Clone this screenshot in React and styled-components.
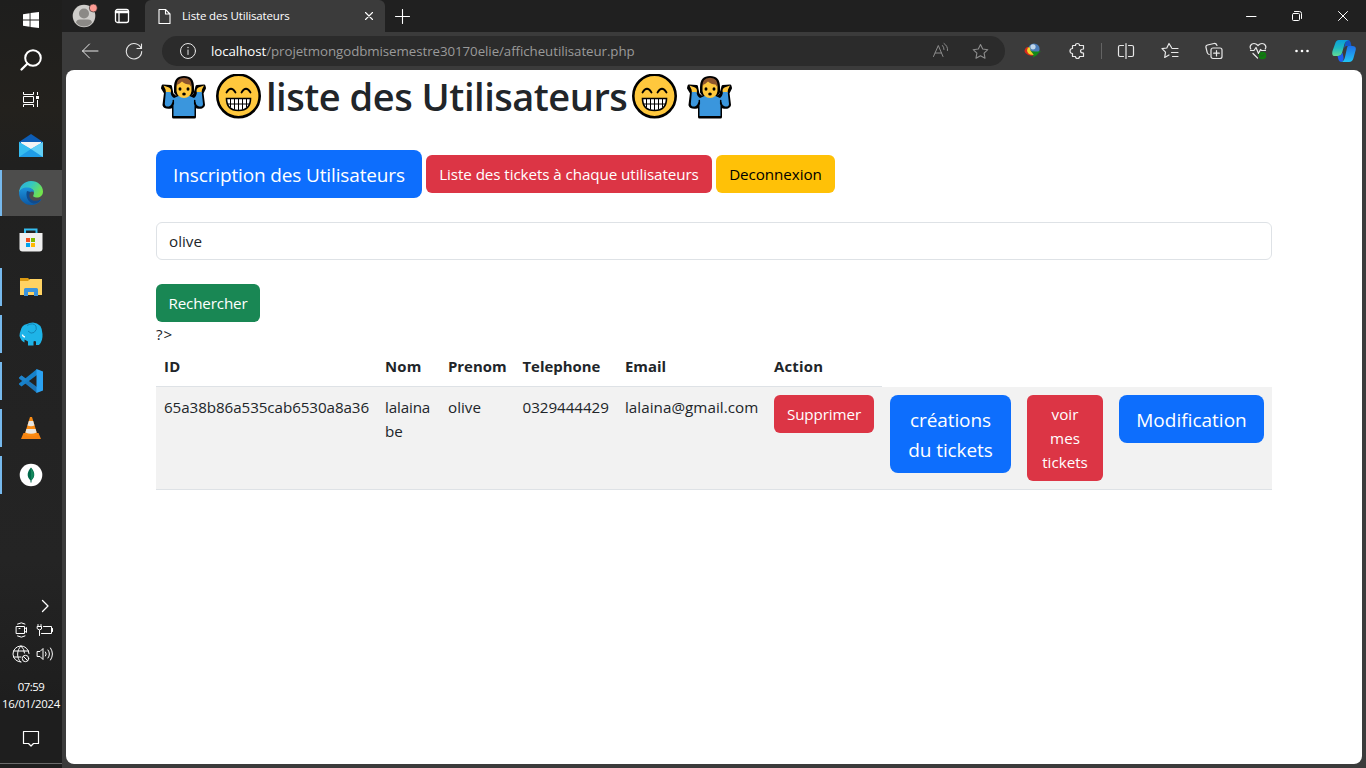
import React from "react";
import styled, { createGlobalStyle } from "styled-components";

const GlobalStyle = createGlobalStyle`
  *, *::before, *::after { box-sizing: border-box; }
  html, body { margin: 0; padding: 0; height: 100%; overflow: hidden; background: #3b3b3b; }
  body { font-family: "Open Sans", "Noto Sans", sans-serif; }
  svg { display: block; flex: none; }
`;

const Desktop = styled.div`
  display: flex;
  width: 1366px;
  height: 768px;
`;

/* ---------- taskbar ---------- */
const Taskbar = styled.aside`
  display: flex;
  flex-direction: column;
  width: 62px;
  background: linear-gradient(#1e1e1d 0, #23211d 110px, #20201f 165px, #222 300px, #242424 560px, #1e1e1e 700px);
  color: #fff;
`;
const SystemSlot = styled.div`
  height: 40px;
  display: flex;
  align-items: center;
  justify-content: center;
`;
const AppList = styled.div`
  display: flex;
  flex-direction: column;
  gap: 1px;
  padding-top: 3px;
`;
const AppSlot = styled.div`
  display: flex;
  align-items: center;
  height: 46px;
  background: ${(p) => (p.$active ? "#4d4d4c" : "transparent")};
`;
const Indicator = styled.span`
  width: 2px;
  height: ${(p) => (p.$active ? 46 : 38)}px;
  background: ${(p) => (p.$on ? "#76b9ed" : "transparent")};
`;
const AppIcon = styled.div`
  flex: 1;
  display: flex;
  justify-content: center;
  padding-right: 2px;
`;
const Tray = styled.div`
  margin-top: auto;
  display: flex;
  flex-direction: column;
`;
const TrayRow = styled.div`
  display: flex;
  align-items: center;
  height: 24px;
  gap: 4px;
  padding-left: ${(p) => p.$left}px;
`;
const Clock = styled.div`
  padding-top: 12px;
  height: 64px;
  font-size: 11.4px;
  line-height: 17px;
  text-align: center;
  white-space: nowrap;
`;
const ClockLine = styled.div`
  letter-spacing: ${(p) => p.$track}px;
`;
const Notifications = styled.div`
  display: flex;
  justify-content: center;
  height: 33px;
`;
const TaskbarEnd = styled.div`
  height: 5px;
  border-top: 1px solid #6b6b6b;
`;

/* ---------- browser ---------- */
const Browser = styled.main`
  flex: 1;
  display: flex;
  flex-direction: column;
  background: #3b3b3b;
  min-width: 0;
`;
const TabStrip = styled.header`
  display: flex;
  height: 32px;
  background: #202020;
  color: #fff;
`;
const StripSlot = styled.div`
  display: flex;
  align-items: center;
  justify-content: center;
  width: ${(p) => p.$w}px;
`;
const Tab = styled.div`
  display: flex;
  align-items: center;
  width: 240px;
  padding: 0 9px 0 13px;
  border-radius: 6px 6px 0 0;
  background: #3b3b3b;
`;
const TabTitle = styled.span`
  flex: 1;
  margin-left: 11px;
  font-size: 11.5px;
  letter-spacing: -0.14px;
  line-height: 16px;
`;
const Spacer = styled.div`
  flex: 1;
`;
const Toolbar = styled.div`
  display: flex;
  align-items: center;
  height: 38px;
  padding-left: 6px;
  color: #e8e8e8;
`;
const AddressBar = styled.div`
  display: flex;
  align-items: center;
  width: 843px;
  height: 30px;
  margin: 0 6px;
  padding: 0 5px 0 16px;
  border-radius: 15px;
  background: #2b2b2b;
`;
const Url = styled.span`
  flex: 1;
  margin-left: 13px;
  color: #9a9a9a;
  font-size: 13.3px;
  letter-spacing: ${(p) => p.$track}px;
  white-space: nowrap;
`;
const Host = styled.span`
  color: #fff;
`;
const ToolSlot = styled.div`
  display: flex;
  align-items: center;
  justify-content: center;
  width: ${(p) => p.$w || 44}px;
  height: 38px;
  color: ${(p) => p.$color || "#e8e8e8"};
`;
const Divider = styled.span`
  width: 1px;
  height: 16px;
  margin: 0 2px;
  background: #646464;
`;

/* ---------- page ---------- */
const Page = styled.section`
  flex: 1;
  margin: 0 4px 4px;
  padding: 0 90px;
  border-radius: 8px;
  background: #fff;
  color: #212529;
  font-size: 15.2px;
  line-height: 24px;
`;
const Heading = styled.h1`
  display: flex;
  align-items: center;
  height: 56px;
  margin: 0 0 24px;
  font-size: 38px;
  font-weight: 600;
  line-height: 48px;
  letter-spacing: ${(p) => p.$track}px;
  white-space: pre;
`;
const HeadingText = styled.span`
  padding-bottom: 5px;
  margin-right: -0.5px;
`;
const Actions = styled.div`
  display: flex;
  align-items: center;
  gap: 4px;
  height: 48px;
`;
const tones = {
  primary: ["#0d6efd", "#fff"],
  danger: ["#dc3545", "#fff"],
  warning: ["#ffc107", "#000"],
  success: ["#198754", "#fff"],
};
const Button = styled.button`
  width: ${(p) => p.$w}px;
  padding: ${(p) => (p.$large ? "10px 0 8px" : "7px 0")};
  border: 0;
  border-radius: ${(p) => (p.$large ? 8 : 6)}px;
  background: ${(p) => tones[p.$tone][0]};
  color: ${(p) => tones[p.$tone][1]};
  font-family: inherit;
  font-size: ${(p) => (p.$large ? 19 : 15.2)}px;
  line-height: ${(p) => (p.$large ? 30 : 24)}px;
  letter-spacing: ${(p) => p.$track || 0}px;
  white-space: pre-line;
  display: block;
`;
const SearchForm = styled.form`
  display: flex;
  flex-direction: column;
  align-items: flex-start;
  gap: 24px;
  margin-top: 24px;
`;
const SearchInput = styled.input`
  width: 100%;
  height: 38px;
  padding: 6px 12px;
  border: 1px solid #dee2e6;
  border-radius: 6px;
  color: #212529;
  font: inherit;
`;
const StrayText = styled.div`
  letter-spacing: 1px;
`;
const Users = styled.table`
  width: 1116px;
  table-layout: fixed;
  border-collapse: separate;
  border-spacing: 0;
`;
const HeadCell = styled.th`
  height: 41px;
  padding: 8px;
  border-bottom: 1px solid #dee2e6;
  text-align: left;
  font-weight: 700;
  font-size: 14.9px;
  letter-spacing: ${(p) => p.$track || 0}px;
`;
const Cell = styled.td`
  height: 103px;
  padding: 8px;
  border-bottom: 1px solid #dee2e6;
  background: #f2f2f2;
  vertical-align: top;
  letter-spacing: ${(p) => p.$track || 0}px;
`;

/* ---------- icons ---------- */
const Line = ({ size = 16, w = 1, children, h }) => (
  <svg width={size} height={h || size} viewBox={`0 0 ${size} ${h || size}`} fill="none" stroke="currentColor" strokeWidth={w} strokeLinecap="round" strokeLinejoin="round">
    {children}
  </svg>
);

const Shrug = () => (
  <svg width="55" height="48" viewBox="0 0 55 48">
    <g stroke="#000" strokeLinejoin="round" strokeLinecap="round" strokeWidth="3">
      <path d="M7 12 L14.500 12.500 L16 20 L20.500 24 L23 22 H33 L35.500 24 L39 20 L41 12.500 L48 12 L48.500 14 L46 19 L47.500 31 Q47 34 41 33 L38.500 30 V43 H17.500 V30 L15 33 Q9 34 8 31 L9.500 19 L6.500 14Z" fill="#000" />
      <path d="M19.500 13 Q19.500 3.500 28 3.500 Q36.500 3.500 36.500 13 V18 L32 24 H24 L19.500 18Z" fill="#000" />
    </g>
    <path d="M7.500 11.500 L13 13.500 Q16 15 14.500 19 H10 L9.500 15.500Z M48 11.500 L42.500 13.500 Q39.500 15 41 19 H45.500 L46 15.500Z" fill="#ffc83d" />
    <path d="M9.800 18 H14.500 Q15 22.500 18 24 L22.500 22 H33.500 L38 24 Q40.500 22.500 41 18 H45.700 L47 30 Q47 33 43 32.500 Q40 31.500 39.500 28 L38.500 29 V42 H17.500 V29 L16.500 28 Q15.500 31.500 13 32.500 Q9 33 8.800 30Z" fill="#3a96dd" />
    <path d="M17.300 30 V26.500 M38.700 30 V26.500" stroke="#000" strokeWidth="1.500" strokeLinecap="round" />
    <path d="M20.500 13 Q20.500 6 28 6 Q35.500 6 35.500 13 V17 Q34.500 24 28 24 Q21.500 24 20.500 17Z" fill="#ffc83d" />
    <path d="M20.500 13.500 Q19.500 4 28 3.700 Q36.500 4 35.500 13.500 L33.500 10.500 Q29 10.500 26 7.500 Q23.500 10 21.500 10.500Z" fill="#8e562e" />
    <ellipse cx="24" cy="15" rx="1.500" ry="1.800" /><ellipse cx="32" cy="15" rx="1.500" ry="1.800" />
    <ellipse cx="28" cy="20" rx="1.800" ry="1.600" />
  </svg>
);
const Grin = () => (
  <svg width="55" height="48" viewBox="0 0 55 48">
    <circle cx="27.500" cy="22" r="21.200" fill="#ffc83d" stroke="#000" strokeWidth="2.600" />
    <path d="M15.500 18.500 Q20 11 24.500 18.500 M30.500 18.500 Q35 11 39.500 18.500" fill="none" stroke="#000" strokeWidth="1.800" strokeLinecap="round" />
    <path d="M15.500 24.500 H39.500 Q39.500 36.500 27.500 36.500 Q15.500 36.500 15.500 24.500Z" fill="#fff" stroke="#000" strokeWidth="1.600" />
    <path d="M16 30 H39 M19.500 24.500 V33.500 M23.500 24.500 V35.500 M27.500 24.500 V36.500 M31.500 24.500 V35.500 M35.500 24.500 V33.500" stroke="#000" strokeWidth="1" />
  </svg>
);
const WindowsLogo = () => (
  <svg width="16" height="16" viewBox="0 0 16 16" fill="#fff">
    <path d="M0 2.200 6.600 1.300V7.500H0Z M7.500 1.100 16 0V7.500H7.500Z M0 8.400H6.600V14.700L0 13.800Z M7.500 8.400H16V16L7.500 14.900Z" />
  </svg>
);
const SearchGlyph = () => (
  <Line size={24} w={2}>
    <circle cx="14" cy="10" r="7.800" /><path d="M8.300 15.700 2.500 21.500" strokeWidth="2.300" />
  </Line>
);
const TaskView = () => (
  <svg width="18" height="18" viewBox="0 0 18 18" fill="none" stroke="#fff">
    <path d="M1.500 1V3.500H11.500V1M1.500 16V13.500H11.500V16M1.500 5.500H11.500V11.500H1.500ZM15.500 1V4M15.500 9V16" />
    <path d="M14 5H17V8H14Z" fill="#fff" stroke="none" />
  </svg>
);
const Mail = () => (
  <svg width="24" height="24" viewBox="0 0 24 24">
    <path d="M0 8 12 0 24 8V12H0Z" fill="#0d5db5" />
    <path d="M2 8H22V15H2Z" fill="#f4f4f4" />
    <path d="M0 8 12 15 24 8V23H0Z" fill="#2bb6ef" />
    <path d="M0 8 24 23H0Z" fill="#36bdf0" /><path d="M12 15 24 23H0Z" fill="#1f9ce6" />
    <path d="M12 15 24 8V23Z" fill="#62d0f7" />
  </svg>
);
const EdgeLogo = () => (
  <svg width="24" height="24" viewBox="0 0 24 24">
    <defs>
      <linearGradient id="edgeTop" x1="0" y1="0" x2="1" y2=".5">
        <stop offset="0" stopColor="#2aa9e2" /><stop offset=".5" stopColor="#35c8c0" /><stop offset="1" stopColor="#72e34d" />
      </linearGradient>
      <linearGradient id="edgeLow" x1="0" y1="0" x2="0" y2="1">
        <stop offset="0" stopColor="#1d93dc" /><stop offset="1" stopColor="#0c59a4" />
      </linearGradient>
    </defs>
    <path d="M0 12A12 12 0 0 1 12 0C19 0 24 5 24 10.500C24 14.500 21 16.500 18 16.500C15 16.500 13.500 15.500 14.500 14C16 11 14 7.500 10 7C5 6.500 1 9 0 12Z" fill="url(#edgeTop)" />
    <path d="M0 12C.5 8.500 4 6.500 8 6.500C12 6.500 15 8.500 15 11.500C13 9.500 10 11 9.500 14C9 18 13 21 17 20.500C19 20.500 20.500 19.500 22.500 18C20.500 22 16.500 24 12 24A12 12 0 0 1 0 12Z" fill="url(#edgeLow)" />
    <path d="M8 10C6.500 14 8 21 14.500 22.500C17 23 20.500 21.500 22.500 18C14 23 7.500 17 11.500 11Z" fill="#114a8b" />
  </svg>
);
const Store = () => (
  <svg width="24" height="24" viewBox="0 0 24 24">
    <path d="M6 6V1.500H17.500V6" fill="none" stroke="#35bdf0" strokeWidth="2" />
    <path d="M.5 5H23.500V20.500Q23.500 23.500 20.500 23.500H3.500Q.5 23.500 .5 20.500Z" fill="#efefef" />
    <path d="M7 10H11V14H7Z" fill="#f25022" /><path d="M12 10H16V14H12Z" fill="#7fba00" />
    <path d="M7 15H11V19H7Z" fill="#00a4ef" /><path d="M12 15H16V19H12Z" fill="#ffb900" />
  </svg>
);
const Explorer = () => (
  <svg width="22" height="18" viewBox="0 0 22 18">
    <path d="M0 0H8L10 2H21V5H0Z" fill="#dc9a12" /><path d="M0 3H8L10 1H22V17H0Z" fill="#ffd363" />
    <path d="M4 18V11.500Q4 10 5.500 10H16.500Q18 10 18 11.500V18H14V14H8V18Z" fill="#3b94dd" />
  </svg>
);
const Elephant = () => (
  <svg width="24" height="24" viewBox="0 0 24 24">
    <path d="M1.500 9Q2.500 3 8 2Q10 .5 14 .5Q23 1 23.500 12Q24 19 20 23H17V19.500Q15.500 18.500 14.500 19.500V23.500H9V19.500L5.500 17.500V20.500Q2 19 .5 14Q.5 11 1.500 9Z" fill="#1eb4e8" />
    <path d="M8 3.500Q14 0 17 4Q18.500 8 15 10.500Q12 12.500 9 9" fill="none" stroke="#1286b8" strokeWidth="1" />
    <path d="M3.500 12.500Q3.500 14.500 6 15" fill="none" stroke="#fff" strokeWidth="1.300" />
  </svg>
);
const VsCode = () => (
  <svg width="24" height="24" viewBox="0 0 24 24">
    <path d="M0 8.500 2.500 6.500 18 18V24L0 9.500Z" fill="#1d76b8" /><path d="M0 15.500 2.500 17.500 18 6V0L0 14.500Z" fill="#1681cb" />
    <path d="M17.500 0 24 2.500V21.500L17.500 24Z" fill="#2ba2f2" /><path d="M0 9 2.500 6.500 8 10.500 5.500 13Z" fill="#2084cb" />
  </svg>
);
const Cone = () => (
  <svg width="20" height="22" viewBox="0 0 20 22">
    <path d="M2.500 16H17.500L20 22H0Z" fill="#f58312" /><path d="M9 0H11L16.500 18Q10 20.500 3.500 18Z" fill="#fa8b13" />
    <path d="M7.800 4H12.200L13.500 8.500Q10 10 6.500 8.500ZM5.400 12H14.600L15.600 15.500Q10 18 4.400 15.500Z" fill="#e8e6e2" />
  </svg>
);
const Mongo = () => (
  <svg width="24" height="24" viewBox="0 0 24 24">
    <circle cx="12" cy="12" r="11.300" fill="#fff" />
    <path d="M12 4.500C8.500 8.500 7 13 11.500 17.500V19.500H12.500V17.500C17 13 15.500 8.500 12 4.500Z" fill="#00684a" /><path d="M12 5V17.500C16.500 13 15 9 12 5Z" fill="#13875c" />
  </svg>
);
const TrayBox = () => (
  <Line size={16}>
    <path d="M2.500 4.500H10.500V11.500H2.500ZM10.500 7 12.500 5.500V10.500L10.500 9M3.500 2Q7.500 -.5 11 2M3.500 14Q7.500 16.500 11 14" /><path d="M5 6.500H6" />
  </Line>
);
const Battery = () => (
  <Line size={18} h={14}>
    <path d="M7.500 3.500H15.500V10.500H5.500M16.500 5.500V8.500M2 1.500V3.500M5 1.500V3.500M1.500 3.500H5.500V6Q3.500 8 1.500 6ZM3.500 7.500V12.500" />
  </Line>
);
const Globe = () => (
  <Line size={18}>
    <path d="M9 17A8 8 0 1 1 17 8.500M1.500 6H16.500M1.500 12H9M9 1C4.500 5 4.500 13 8.500 17M9 1Q12.500 4 12.500 8" />
    <circle cx="13.500" cy="13.500" r="3.200" /><path d="M11.500 11.500 15.500 15.500" />
  </Line>
);
const Speaker = () => (
  <Line size={18}>
    <path d="M1.500 6.500H4L7 3.500V14.500L4 11.500H1.500ZM9.500 7Q11 9 9.500 11M12 5Q15 9 12 13M14.500 3Q18.500 9 14.500 15" />
  </Line>
);
const Avatar = () => (
  <svg width="26" height="26" viewBox="0 0 26 26">
    <circle cx="12" cy="13" r="11.300" fill="#cfcdca" />
    <circle cx="12" cy="10.500" r="5" fill="#8b8986" /><path d="M4 19.500Q4.500 16.500 8 16.500H16Q19.500 16.500 20 19.500Q17 23.500 12 23.500Q7 23.500 4 19.500Z" fill="#8b8986" />
    <circle cx="21.300" cy="5" r="4" fill="#ff9c94" stroke="#202020" strokeWidth=".6" />
  </svg>
);
const Idm = () => (
  <svg width="18" height="16" viewBox="0 0 18 16">
    <circle cx="10" cy="6" r="5.600" fill="#4a7cb8" /><circle cx="9" cy="3.800" r="2.600" fill="#c0d6ea" />
    <path d="M3 4Q-1 7 1.500 10Q5 14 11 12L10 9Q6 10 4.500 4Z" fill="#d92b1c" />
    <path d="M4 4.500Q1.500 9 6 11.500L10 12V9.500Q6 9 6 4.500Z" fill="#f0d42b" />
    <path d="M6 7Q8 9.500 17 8L14.500 10 13 12 9 14.500 9.500 11.500Z" fill="#128a1a" />
  </svg>
);
const Copilot = () => (
  <svg width="24" height="22" viewBox="0 0 24 22">
    <defs>
      <linearGradient id="cpA" x1="0" y1="0" x2="0" y2="1"><stop offset="0" stopColor="#0b9ed8" /><stop offset=".5" stopColor="#1fb9c0" /><stop offset="1" stopColor="#62dc94" /></linearGradient>
      <linearGradient id="cpB" x1="0" y1="0" x2="0" y2="1"><stop offset="0" stopColor="#1f6fe8" /><stop offset="1" stopColor="#20c4f4" /></linearGradient>
    </defs>
    <path d="M14 0H16Q18 0 18.500 2L19.500 6H14L12 8Z" fill="#1457c8" />
    <path d="M16 6H20.500Q24.500 6 23.700 10L21.500 18Q20.500 22 17 22H9Q12 21.500 13 17L15 8Q15.500 6 16 6Z" fill="url(#cpB)" />
    <path d="M7 0H17Q13.500 .5 12.500 4L10 13Q9 16 6 16H3Q-.7 16 .5 11L3 4Q4 0 7 0Z" fill="url(#cpA)" />
    <path d="M5.500 16Q9 16 10.500 12.500L11.500 17Q12 21 9.500 22Q7 22 6.300 19Z" fill="#1d5ff0" />
  </svg>
);
const STAR = "M8.500 1.500 10.700 6 15.800 6.700 12.100 10.200 13 15.200 8.500 12.800 4 15.200 4.900 10.200 1.200 6.700 6.300 6Z";

const apps = [
  { id: "mail", icon: <Mail /> },
  { id: "edge", icon: <EdgeLogo />, on: true, active: true },
  { id: "store", icon: <Store /> },
  { id: "explorer", icon: <Explorer />, on: true },
  { id: "mamp", icon: <Elephant />, on: true },
  { id: "code", icon: <VsCode />, on: true },
  { id: "vlc", icon: <Cone />, on: true },
  { id: "compass", icon: <Mongo />, on: true },
];

const columnWidths = [221, 63, 74.5, 102.500, 149, 116, 137, 92, 161];

export default function App() {
  return (
    <Desktop>
      <GlobalStyle />
      <Taskbar>
        <SystemSlot><WindowsLogo /></SystemSlot>
        <SystemSlot><SearchGlyph /></SystemSlot>
        <SystemSlot><TaskView /></SystemSlot>
        <AppList>
          {apps.map((a) => (
            <AppSlot key={a.id} $active={a.active}>
              <Indicator $on={a.on} $active={a.active} />
              <AppIcon>{a.icon}</AppIcon>
            </AppSlot>
          ))}
        </AppList>
        <Tray>
          <TrayRow $left={37}><Line w={1.3}><path d="M5.500 2.500 11 8 5.500 13.500" /></Line></TrayRow>
          <TrayRow $left={14}><TrayBox /><TrayRow $left={2}><Battery /></TrayRow></TrayRow>
          <TrayRow $left={12}><Globe /><TrayRow $left={2}><Speaker /></TrayRow></TrayRow>
          <Clock>
            <ClockLine $track={-0.5}>07:59</ClockLine>
            <ClockLine $track={-0.25}>16/01/2024</ClockLine>
          </Clock>
          <Notifications>
            <Line size={18} w={1.200}><path d="M1.500 1.500H16.500V13.500H11.500L9 16 6.500 13.500H1.500Z" /></Line>
          </Notifications>
          <TaskbarEnd />
        </Tray>
      </Taskbar>

      <Browser>
        <TabStrip>
          <StripSlot $w={45}><Avatar /></StripSlot>
          <StripSlot $w={30}>
            <Line size={16} w={1.300}><rect x="1.500" y="1.500" width="13" height="13" rx="2" /><path d="M2 4H14" strokeWidth="2.500" /><path d="M5 5V14" /></Line>
          </StripSlot>
          <StripSlot $w={8} />
          <Tab>
            <Line size={13} h={17} w={1.100}><path d="M1 1.500H7.500L12 6V15.500H1ZM7.500 1.500V6H12" /></Line>
            <TabTitle>Liste des Utilisateurs</TabTitle>
            <Line size={14} w={1.100}><path d="M3.500 3.500 10.500 10.500M10.500 3.500 3.500 10.500" /></Line>
          </Tab>
          <StripSlot $w={35}><Line size={15} w={1.100}><path d="M7.500 .5V14.500M.5 7.500H14.500" /></Line></StripSlot>
          <Spacer />
          <StripSlot $w={46}><Line size={11}><path d="M.5 5.500H10" /></Line></StripSlot>
          <StripSlot $w={46}><Line size={12}><rect x="1.500" y="3.500" width="7" height="7" rx="1" /><path d="M3.500 1.500H8.500Q10.500 1.500 10.500 3.500V8.500" /></Line></StripSlot>
          <StripSlot $w={46}><Line size={12}><path d="M1.500 1.500 10.500 10.500M10.500 1.500 1.500 10.500" /></Line></StripSlot>
        </TabStrip>

        <Toolbar>
          <ToolSlot><Line size={18}><path d="M17 9H1.500M8.500 2 1.500 9 8.500 16" /></Line></ToolSlot>
          <ToolSlot><Line size={18} w={1.100}><path d="M16.200 6.500A7.700 7.700 0 1 0 16.700 9.500M16.500 2V6.500H12" /></Line></ToolSlot>
          <AddressBar>
            <Line size={20} h={18}><circle cx="10" cy="9" r="7.500" /><path d="M10 8V12.500" /><path d="M10 5.500V5.600" strokeWidth="1.400" /></Line>
            <Url $track={-0.06}><Host>localhost</Host>/projetmongodbmisemestre30170elie/afficheutilisateur.php</Url>
            <ToolSlot $w={40} $color="#8d8d8d">
              <Line size={18}><path d="M2.500 14.500 7.300 3.500 12 14.500M4.200 11H10.400M11.500 3.500Q13 5 13 7.500M13 1.500Q17 4 16.500 8.500" /></Line>
            </ToolSlot>
            <ToolSlot $w={40} $color="#8d8d8d"><Line size={17} w={1.100}><path d={STAR} /></Line></ToolSlot>
          </AddressBar>
          <ToolSlot><Idm /></ToolSlot>
          <ToolSlot>
            <Line size={18} w={1.200}><path d="M5 3.500H7.500Q7.500 1.500 9.500 1.500Q11.500 1.500 11.500 3.500H15.500V7Q12.500 7 12.500 9Q12.500 11 15.500 11V14.500H11.500Q11.500 16.500 9.500 16.500Q7.500 16.500 7.500 14.500H4.500V11.500Q2 11.500 2 9Q2 6.500 4.500 6.500V4Z" /></Line>
          </ToolSlot>
          <Divider />
          <ToolSlot><Line size={18} w={1.200}><path d="M6.500 3.500H3Q1.500 3.500 1.500 5V13Q1.500 14.500 3 14.500H6.500M11.500 3.500H15Q16.500 3.500 16.500 5V13Q16.500 14.500 15 14.500H11.500M9 1.500V16.500" /></Line></ToolSlot>
          <ToolSlot><Line size={18} w={1.200}><path d="M10.500 5.500 8 1.500 5.800 6 1 6.700 4.500 10.200 3.700 15.500 8 13M11 6.500H17M10.500 10.500H17M11.500 14.500H17" /></Line></ToolSlot>
          <ToolSlot><Line size={18} w={1.200}><rect x="6" y="6" width="11" height="10.500" rx="2" /><path d="M11.500 8.500V14M8.700 11.200H14.300M4.200 12.500Q2.500 12 2.200 10.500L1 5.500Q.5 3.500 2.500 3L9 1.500Q11 1 12 3.500" /></Line></ToolSlot>
          <ToolSlot>
            <Line size={18} w={1.200}><path d="M1.800 7Q0 4 3 2Q6 .5 9 3.500Q12 .5 15 2Q18 4 16.200 7M1.500 8.500H5L7 5.500 9.500 11.500 11.500 7.500 12.500 8.500H16.500M4 11.500 8.500 16" /><circle cx="13.500" cy="13.500" r="3.200" fill="#107c10" stroke="#107c10" /><path d="M12 13.500 13 14.500 15 12.500" stroke="#2b4a2b" strokeWidth=".8" /></Line>
          </ToolSlot>
          <ToolSlot><svg width="16" height="4" viewBox="0 0 16 4" fill="#fff"><circle cx="2.500" cy="2" r="1.300" /><circle cx="8" cy="2" r="1.300" /><circle cx="13.500" cy="2" r="1.300" /></svg></ToolSlot>
          <ToolSlot $w={39}><Copilot /></ToolSlot>
        </Toolbar>

        <Page>
          <Heading $track={-0.48}><Shrug /><Grin /><HeadingText>liste des Utilisateurs</HeadingText><Grin /><Shrug /></Heading>
          <Actions>
            <Button $large $tone="primary" $w={266} $track={-0.14}>Inscription des Utilisateurs</Button>
            <Button $tone="danger" $w={286} $track={-0.08}>Liste des tickets à chaque utilisateurs</Button>
            <Button $tone="warning" $w={119} $track={-0.06}>Deconnexion</Button>
          </Actions>
          <SearchForm>
            <SearchInput type="text" defaultValue="olive" />
            <Button type="button" $tone="success" $w={104} $track={-0.15}>Rechercher</Button>
          </SearchForm>
          <StrayText>?&gt;</StrayText>
          <Users>
            <colgroup>
              {columnWidths.map((w, i) => (<col key={i} width={w} />))}
            </colgroup>
            <thead>
              <tr>
                <HeadCell $track={0.2}>ID</HeadCell>
                <HeadCell $track={0.2}>Nom</HeadCell>
                <HeadCell>Prenom</HeadCell>
                <HeadCell>Telephone</HeadCell>
                <HeadCell>Email</HeadCell>
                <HeadCell $track={0.2}>Action</HeadCell>
              </tr>
            </thead>
            <tbody>
              <tr>
                <Cell $track={-0.08}>65a38b86a535cab6530a8a36</Cell>
                <Cell $track={-0.15}>lalaina be</Cell>
                <Cell>olive</Cell>
                <Cell $track={-0.05}>0329444429</Cell>
                <Cell $track={0.04}>lalaina@gmail.com</Cell>
                <Cell><Button $tone="danger" $w={100} $track={-0.1}>Supprimer</Button></Cell>
                <Cell><Button $large $tone="primary" $w={121} $track={-0.1}>{"créations\ndu tickets"}</Button></Cell>
                <Cell><Button $tone="danger" $w={76}>{"voir\nmes\ntickets"}</Button></Cell>
                <Cell><Button $large $tone="primary" $w={145}>Modification</Button></Cell>
              </tr>
            </tbody>
          </Users>
        </Page>
      </Browser>
    </Desktop>
  );
}
